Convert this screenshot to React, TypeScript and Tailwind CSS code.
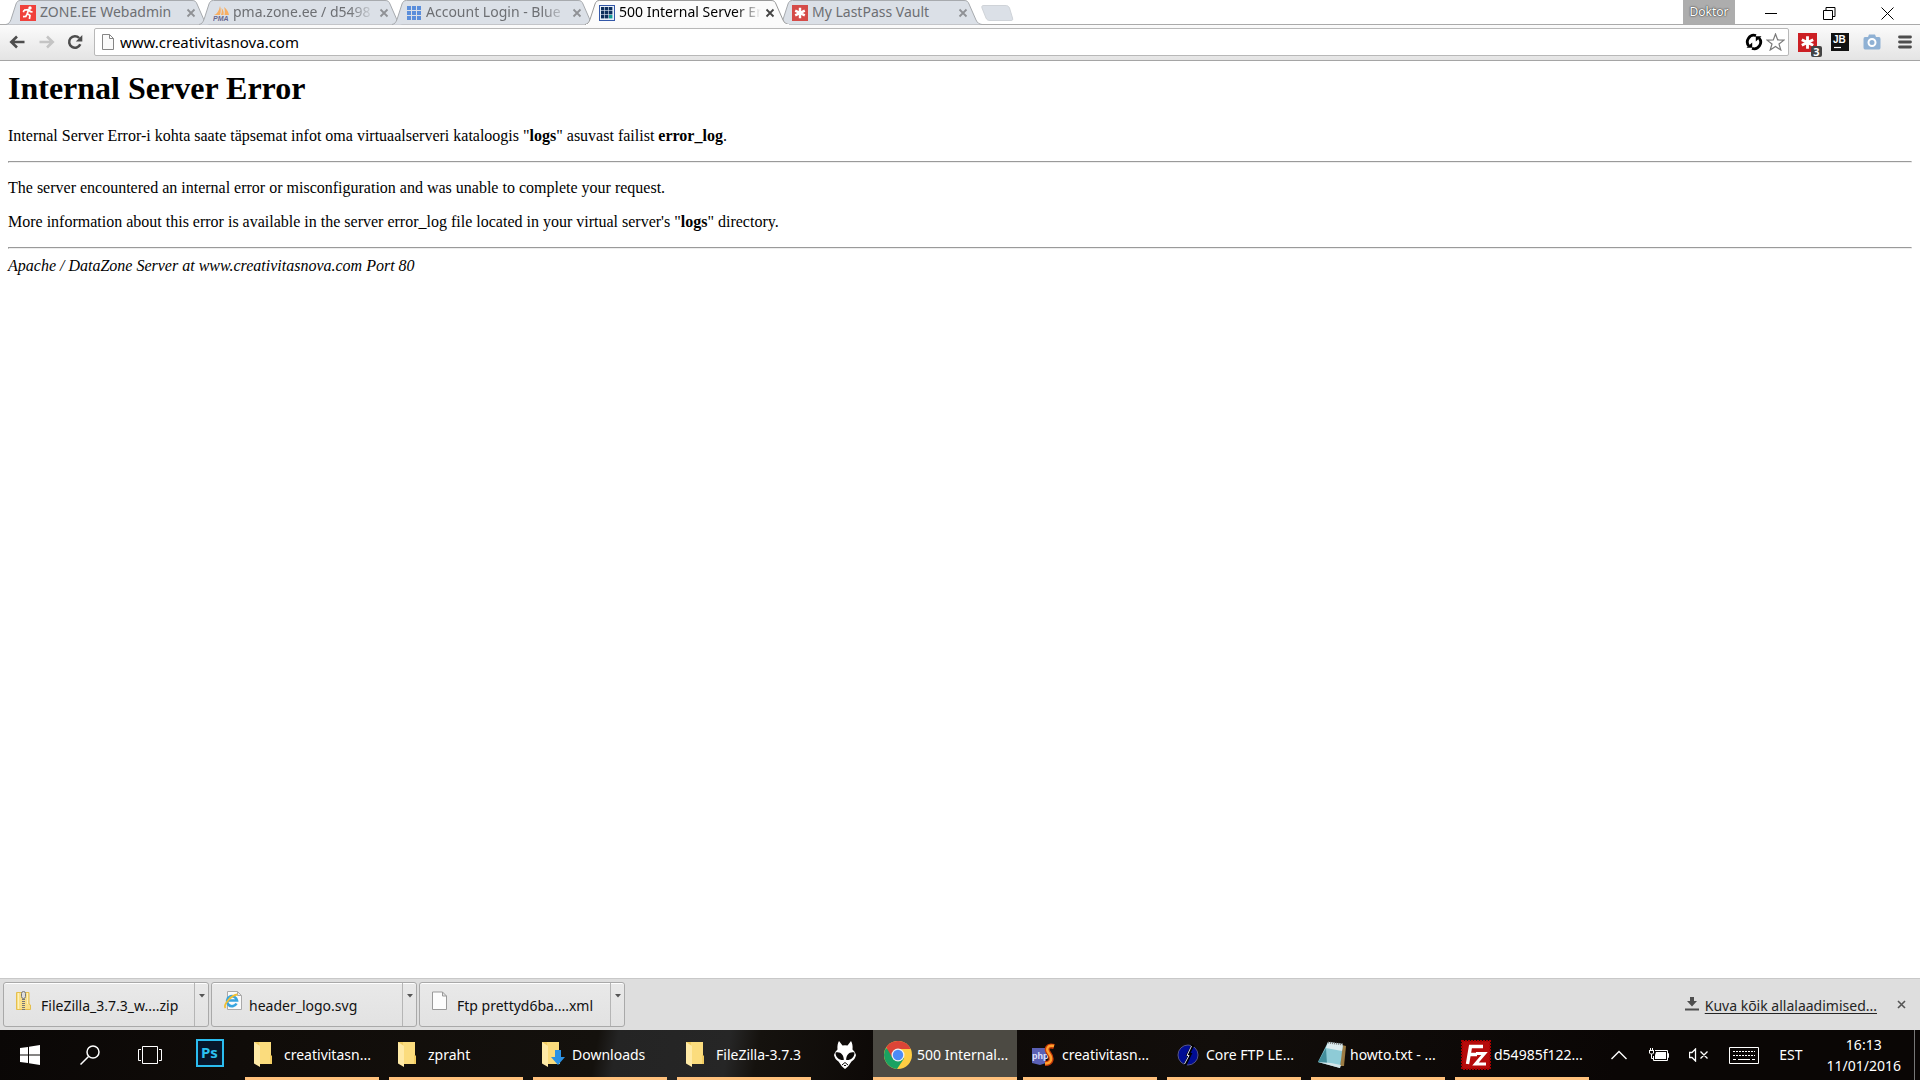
import type { ReactNode } from "react";
import clsx from "clsx";

/* ---------- Favicons ---------- */

function ZoneIcon() {
  return (
    <svg width="16" height="16" viewBox="0 0 16 16">
      <rect width="16" height="16" fill="#f0413c" />
      <circle cx="10" cy="3" r="1.7" fill="#fff" />
      <path d="M4 5.2 8.6 4.6 10.4 6.6 12.6 7M8.6 5 7.2 8.6 10 10.4 9.4 14M7.2 8.8 5.8 11.4 3 11.6M4 5.2 3.4 7.2" fill="none" stroke="#fff" strokeWidth="1.7" />
    </svg>
  );
}

function PmaIcon() {
  return (
    <svg width="17" height="16" viewBox="0 0 17 16">
      <path d="M1 10C4 9 6 6 7 1c1 3 1 6 0 9zM8 10c1-3 1-5 .500-7 2 2 2.500 4 2 7zM11.500 10c.500-3 .500-5-.500-8 3 2 4.500 5 5 8z" fill="#f7ae62" />
      <text x="0" y="15.500" fontSize="7" fontWeight="700" fontStyle="italic" fill="#67678f" fontFamily="Liberation Sans, sans-serif">PMA</text>
    </svg>
  );
}

function GridIcon({ dark }: { dark?: boolean }) {
  const cells = [0, 1, 2, 3, 4, 5, 6, 7, 8];
  return (
    <svg width="16" height="16" viewBox="0 0 16 16">
      {dark && <rect x="0.500" y="0.500" width="15" height="15" fill="#e8f1fa" stroke="#3357a8" />}
      {cells.map((i) =>
        dark ? (
          <rect key={i} x={2 + (i % 3) * 4} y={2 + Math.floor(i / 3) * 4} width="3.400" height="3.400" fill={i === 8 ? "#119c94" : "#0d2f5d"} />
        ) : (
          <rect key={i} x={1 + (i % 3) * 5} y={1 + Math.floor(i / 3) * 5} width="4" height="4" fill="#5b8edb" />
        )
      )}
    </svg>
  );
}

function LastPassIcon({ size = 16, color = "#d54b48" }: { size?: number; color?: string }) {
  return (
    <svg width={size} height={size} viewBox="0 0 16 16">
      <rect width="16" height="16" fill={color} />
      <path d="M8 2.800v10.400M3.200 5.600l9.600 4.800M12.800 5.600l-9.600 4.800" stroke="#fff" strokeWidth="2.400" />
    </svg>
  );
}

/* ---------- Tab strip ---------- */

const tabs = [
  { title: "ZONE.EE Webadmin", icon: <ZoneIcon /> },
  { title: "pma.zone.ee / d5498", icon: <PmaIcon />, faded: true },
  { title: "Account Login - Blue", icon: <GridIcon />, faded: true },
  { title: "500 Internal Server Er", icon: <GridIcon dark />, active: true, faded: true },
  { title: "My LastPass Vault", icon: <LastPassIcon /> },
];

interface TabProps {
  title: string;
  icon: ReactNode;
  active?: boolean;
  faded?: boolean;
}

function Tab({ title, icon, active, faded }: TabProps) {
  return (
    <div className={clsx("relative -mr-4 h-[25px] w-[209px] shrink-0", active && "z-10")}>
      <svg className="absolute inset-0" width="209" height="25" viewBox="0 0 209 25">
        <path
          d="M0 24.500C3 24 4 22 5 19.500L10 4C11 1.500 12 .500 14.500 .500H186C189 .500 190 1.500 191 4L198 20C199.500 23 201 24 204 24.500"
          fill={active ? "#fbfbfb" : "#dbe0e7"}
          stroke={active ? "#999" : "#a7aaae"}
        />
        {active && <path d="M1 24.500H204" stroke="#fbfbfb" />}
      </svg>
      <div className="relative flex h-6 items-center pl-[14px]">
        <span className="w-5 shrink-0 pt-px">{icon}</span>
        <button
          className={clsx(
            "w-[142px] shrink-0 text-left text-[14px] leading-6 whitespace-nowrap",
            active ? "text-black" : "text-[#6d6f73]",
            faded && "[mask-image:linear-gradient(to_right,#000_116px,transparent)]"
          )}
        >
          {title}
        </button>
        <button aria-label={`Close ${title}`} className={clsx("ml-1 pt-0.5", active ? "text-[#444]" : "text-[#8f9195]")}>
          <svg width="10" height="10" viewBox="0 0 10 10">
            <path d="M1.500 1.500l7 7M8.500 1.500l-7 7" stroke="currentColor" strokeWidth="1.800" />
          </svg>
        </button>
      </div>
    </div>
  );
}

function TabStrip() {
  return (
    <header className="relative flex h-[25px] items-start border-b border-[#aaa] bg-white pl-[6px]">
      {tabs.map((tab) => (
        <Tab key={tab.title} {...tab} />
      ))}
      <button aria-label="New tab" className="mt-[5px] ml-[22px]">
        <svg width="34" height="16" viewBox="0 0 34 16" className="-ml-3">
          <path d="M3 .500H24C26.500 .500 27.500 1 28.500 3L31.500 13C32 15 31.500 15.500 30 15.500H9C7 15.500 6 15 5 13L1 3C.500 1 1 .500 3 .500z" fill="#dbe0e7" stroke="#cfd3d8" />
        </svg>
      </button>
      <div className="ml-auto flex items-start pr-1">
        <button className="mr-[7px] h-6 w-[52px] bg-[#adadad] text-[12px] leading-6 text-white [text-shadow:0_0_2px_#333,0_0_1px_#333]">Doktor</button>
        <button aria-label="Minimize" className="flex h-6 w-[58px] items-center justify-center pt-[3px]">
          <svg width="13" height="13" viewBox="0 0 13 13" stroke="#000" fill="none"><path d="M0 6.500h12" /></svg>
        </button>
        <button aria-label="Restore" className="flex h-6 w-[58px] items-center justify-center pt-[3px]">
          <svg width="13" height="13" viewBox="0 0 13 13" stroke="#000" fill="none">
            <path d="M.500 3.500h9v9h-9zM3 3.500V.500h9v9H9.500" />
          </svg>
        </button>
        <button aria-label="Close" className="flex h-6 w-[58px] items-center justify-center pt-[3px]">
          <svg width="13" height="13" viewBox="0 0 13 13" stroke="#000" fill="none"><path d="M.500 .500l12 12M12.500 .500l-12 12" /></svg>
        </button>
      </div>
    </header>
  );
}

/* ---------- Toolbar ---------- */

function Toolbar() {
  return (
    <nav className="flex h-9 items-center border-b border-[#a5a5a5] bg-linear-to-b from-[#fbfbfb] to-[#e4e4e4] pr-2 pb-px pl-[9px]">
      <button aria-label="Back">
        <svg width="16" height="14" viewBox="0 0 16 14"><path d="M15.500 7H3M8 1.500 2.300 7 8 12.500" fill="none" stroke="#4d4d4d" strokeWidth="2.600" /></svg>
      </button>
      <button aria-label="Forward" className="ml-[14px]">
        <svg width="16" height="14" viewBox="0 0 16 14"><path d="M.500 7H13M8 1.500 13.700 7 8 12.500" fill="none" stroke="#c4c4c4" strokeWidth="2.600" /></svg>
      </button>
      <button aria-label="Reload" className="ml-3">
        <svg width="16" height="16" viewBox="0 0 16 16">
          <path d="M13.300 10.300A5.800 5.800 0 1 1 12.200 4" fill="none" stroke="#4d4d4d" strokeWidth="2.500" />
          <path d="M15.300 1v6.500H8.800z" fill="#4d4d4d" />
        </svg>
      </button>
      <div className="ml-[11px] flex h-7 flex-1 items-center rounded-[2px] border border-[#b8b8b8] bg-white pr-[3px] pl-[7px]">
        <svg width="12" height="16" viewBox="0 0 12 16">
          <path d="M.500 .500H7.500L11.500 4.500V15.500H.500zM7.500 .500V4.500H11.500" fill="#fafafa" stroke="#858585" />
        </svg>
        <input
          aria-label="Address"
          defaultValue="www.creativitasnova.com"
          className="ml-[6px] min-w-0 flex-1 bg-transparent text-[15px] leading-6 text-black outline-none"
        />
        {/* Page action: two chasing arrows */}
        <svg width="18" height="18" viewBox="0 0 18 18" fill="none" stroke="#000" strokeWidth="2.800">
          <path d="M11 2.600A6.600 6.600 0 0 0 4 13.200M7 15.400A6.600 6.600 0 0 0 14 4.800" />
          <path d="M1.500 14.800H7.200V9.500zM16.500 3.200H10.800V8.500z" fill="#000" stroke="none" />
        </svg>
        <button aria-label="Bookmark" className="ml-[3px]">
          <svg width="19" height="18" viewBox="0 0 19 18">
            <path d="M9.500 1l2.200 5.900 6.300.200-5 3.900 1.800 6-5.300-3.500L4.200 17 6 11 1 7.100l6.300-.200z" fill="#fff" stroke="#7a7a7a" strokeWidth="1.200" />
          </svg>
        </button>
      </div>
      <button aria-label="LastPass" className="relative ml-[9px]">
        <LastPassIcon size={19} color="#cc1f24" />
        <span className="absolute -right-[5px] -bottom-[5px] h-[11px] w-[11px] rounded-[2px] bg-[#444] text-center text-[11px] leading-[11px] font-bold text-white">3</span>
      </button>
      <button aria-label="JetBrains" className="ml-[14px]">
        <svg width="18" height="18" viewBox="0 0 18 18">
          <rect width="18" height="18" fill="#111" />
          <text x="2" y="10" fontSize="10" fontWeight="700" fill="#fff" fontFamily="Liberation Sans, sans-serif">JB</text>
          <path d="M3 14.500h7" stroke="#fff" strokeWidth="1.200" />
        </svg>
      </button>
      <button aria-label="Screenshot" className="ml-[14px]">
        <svg width="18" height="16" viewBox="0 0 18 16">
          <path d="M2 3H5L6 .500H12L13 3H16Q17.500 3 17.500 5V13.500Q17.500 15.500 16 15.500H2Q.500 15.500 .500 13.500V5Q.500 3 2 3z" fill="#8fb1d4" />
          <circle cx="9" cy="8.500" r="3.500" fill="#8fb1d4" stroke="#fff" strokeWidth="2" />
        </svg>
      </button>
      <button aria-label="Menu" className="ml-[17px]">
        <svg width="14" height="14" viewBox="0 0 14 14"><path d="M1.500 2h11M1.500 7h11M1.500 12h11" stroke="#4d4d4d" strokeWidth="2.800" strokeLinecap="round" /></svg>
      </button>
    </nav>
  );
}

/* ---------- Page ---------- */

function ErrorPage() {
  const rule = "h-[2px] border border-[#9a9a9a] border-r-[#eee] border-b-[#eee]";
  return (
    <main className="flex-1 bg-white p-2 font-['Liberation_Serif',serif] text-[16px] leading-[18px] text-black">
      <h1 className="text-[32px] leading-[38px] font-bold">Internal Server Error</h1>
      <p className="mt-5">
        Internal Server Error-i kohta saate täpsemat infot oma virtuaalserveri kataloogis "<b>logs</b>" asuvast failist <b>error_log</b>.
      </p>
      <hr className={clsx(rule, "my-4")} />
      <p>The server encountered an internal error or misconfiguration and was unable to complete your request.</p>
      <p className="mt-4">
        More information about this error is available in the server error_log file located in your virtual server's "<b>logs</b>" directory.
      </p>
      <hr className={clsx(rule, "mt-4 mb-2")} />
      <address className="italic">Apache / DataZone Server at www.creativitasnova.com Port 80</address>
    </main>
  );
}

/* ---------- Download shelf ---------- */

function ZipIcon() {
  return (
    <svg width="16" height="20" viewBox="0 0 16 20">
      <path d="M.500 1.500H13V13L14.500 14V18.500H.500z" fill="#f9e08a" stroke="#e5bf4e" />
      <path d="M2.500 2v16M11.500 2v11" stroke="#fdf1bd" />
      <rect x="5.500" y=".500" width="4" height="7" rx="2" fill="#ddd" stroke="#777" />
      <path d="M7.500 8v11" stroke="#777" strokeWidth="3" strokeDasharray="1 1" />
    </svg>
  );
}

function SvgFileIcon() {
  return (
    <svg width="18" height="20" viewBox="0 0 18 20">
      <path d="M3.500 .500H13.500L17.500 4.500V18.500H3.500zM13.500 .500V4.500H17.500" fill="#fafafa" stroke="#aaa" />
      <path d="M12.500 12.500A5 5 0 1 1 13 9.500H4" fill="none" stroke="#38a5df" strokeWidth="2.600" />
      <path d="M1.500 17C-1 14 7 4 13.500 3.500" fill="none" stroke="#f1bf33" strokeWidth="1.800" />
    </svg>
  );
}

function BlankFileIcon() {
  return (
    <svg width="15" height="20" viewBox="0 0 15 20">
      <path d="M.500 1H10.500L14.500 5V18.500H.500zM10.500 1V5H14.500" fill="#fcfcfc" stroke="#999" />
    </svg>
  );
}

const downloads = [
  { name: "FileZilla_3.7.3_w....zip", icon: <ZipIcon /> },
  { name: "header_logo.svg", icon: <SvgFileIcon /> },
  { name: "Ftp prettyd6ba....xml", icon: <BlankFileIcon /> },
];

function DownloadShelf() {
  return (
    <section className="flex h-[52px] items-start gap-[2px] border-t border-[#c8c8c8] bg-[#dedede] pt-[3px] pl-[3px]">
      {downloads.map((file) => (
        <div key={file.name} className="flex h-[45px] w-[206px] rounded-[3px] border border-[#a9a9a9] bg-linear-to-b from-[#e9e9e9] to-[#e2e2e2] shadow-[inset_0_1px_0_#fff]">
          <button className="flex flex-1 pt-2 pl-3 text-left text-[14px] leading-6 whitespace-nowrap text-[#111]">
            <span className="w-[25px] shrink-0">{file.icon}</span>
            <span className="pt-[3px]">{file.name}</span>
          </button>
          <button aria-label={`Options for ${file.name}`} className="flex w-[14px] items-start justify-center border-l border-[#b5b5b5] pt-[11px]">
            <svg width="6" height="4" viewBox="0 0 6 4"><path d="M0 0h6L3 3.500z" fill="#555" /></svg>
          </button>
        </div>
      ))}
      <div className="ml-auto flex items-center pt-3 pr-[14px]">
        <svg className="mb-1" width="14" height="14" viewBox="0 0 14 14"><path d="M5 0h4v4h3L7 9.500 2 4h3zM0 11.500h14v2H0z" fill="#4f4f4f" /></svg>
        <a href="#downloads" className="ml-[6px] text-[14px] leading-6 text-[#252525] underline underline-offset-2">Kuva kõik allalaadimised...</a>
        <button aria-label="Close downloads" className="mb-1 ml-5">
          <svg width="9" height="9" viewBox="0 0 9 9"><path d="M1 1l7 7M8 1l-7 7" stroke="#555" strokeWidth="1.600" /></svg>
        </button>
      </div>
    </section>
  );
}

/* ---------- Taskbar ---------- */

function FolderIcon({ download }: { download?: boolean }) {
  return (
    <svg width="24" height="26" viewBox="0 0 24 26">
      <path d="M0 0H17V13L18 14V22H2z" fill="#f2cd62" />
      <path d="M5 0H17V13H16V22H5z" fill="#fbdc7d" />
      <path d="M0 0 6 4V25L0 21.500z" fill="#ffeaa6" />
      {download && <path d="M13 8h6v7h4l-7 8-7-8h4z" fill="#2c92e4" />}
    </svg>
  );
}

function ChromeIcon() {
  return (
    <svg width="28" height="28" viewBox="0 0 28 28">
      <circle cx="14" cy="14" r="14" fill="#ffcd43" />
      <path d="M14 14 1.900 7A14 14 0 0 0 13 28L20 17.500z" fill="#1ba261" />
      <path d="M14 8H26.600A14 14 0 0 0 2.300 6.300L8.500 17z" fill="#dc4437" />
      <circle cx="14" cy="14" r="6.500" fill="#f1f1f1" />
      <circle cx="14" cy="14" r="5.200" fill="#4c8bf5" />
    </svg>
  );
}

function PhpStormIcon() {
  return (
    <svg width="24" height="24" viewBox="0 0 24 24">
      <path d="M0 5h14v15l-6 2-8-2z" fill="#5a60b4" />
      <text x="0" y="16" fontSize="9" fontWeight="700" fill="#dfe0fb" fontFamily="Liberation Sans, sans-serif">php</text>
      <path d="M22 3.500C15.500 1.500 13.500 6 17 10.500S20 20.500 13 20.500" fill="none" stroke="#c83a08" strokeWidth="5" />
      <path d="M22 3C15.500 1.500 13.500 6 17 10.500S20 20.500 13 20.500" fill="none" stroke="#ffa02e" strokeWidth="2.400" />
    </svg>
  );
}

function CoreFtpIcon() {
  return (
    <svg width="22" height="22" viewBox="0 0 22 22">
      <circle cx="11" cy="11" r="10" fill="#000c94" stroke="#55558a" />
      <path d="M16 1 11 10.500h2L8 21" fill="none" stroke="#000" strokeWidth="3" />
      <path d="M14.500 2 10 11.500h2L7.500 20" fill="none" stroke="#d8d8ef" />
    </svg>
  );
}

function NotepadIcon() {
  return (
    <svg width="28" height="28" viewBox="0 0 28 28">
      <path d="M24 4 28 5 26 25H22z" fill="#9d7c44" />
      <path d="M10 1 25 3 22 27 0 21z" fill="#8ecbd6" />
      <path d="M10 1 25 3 24 10 8 7z" fill="#dcecef" />
      <path d="M8 7 0 21 9 23z" fill="#438e9c" />
      <path d="M0 21 22 27 23 24 13 22z" fill="#d5e5e8" />
      <path d="M10 1.500 25 3.500" stroke="#777" strokeWidth="2" strokeDasharray="1 1" />
    </svg>
  );
}

function FileZillaIcon() {
  return (
    <svg width="30" height="30" viewBox="0 0 30 30">
      <rect x="1" y="1" width="28" height="28" fill="#b60b0b" stroke="#a00" strokeWidth="2" strokeDasharray="2 1" />
      <path d="M6.500 24 9.500 6.500H22M8 14.500H16" fill="none" stroke="#fff" strokeWidth="3.400" />
      <path d="M15 13.500H23.500L14.500 24H25" fill="none" stroke="#fff" strokeWidth="3" />
    </svg>
  );
}

function FoobarIcon() {
  return (
    <svg width="22" height="28" viewBox="0 0 22 28">
      <path d="M5 0 8.500 4.500Q11 3.800 13.500 4.500L17 0Q19 3 18.500 8.500Q21.500 11 22 14Q21 18.500 17.500 20.500L14 25.500 11 28 8 25.500 4.500 20.500Q1 18.500 0 14Q.500 11 3.500 8.500Q3 3 5 0z" fill="#fff" />
      <path d="M1.500 11.500C6 10 10 13.500 9.800 19C5.500 19.500 1.500 16.500 1.500 11.500zM20.500 11.500C16 10 12 13.500 12.200 19C16.500 19.500 20.500 16.500 20.500 11.500z" fill="#0b0908" />
      <path d="M8 24 11 21.500 14 24M10 24.500h2" fill="none" stroke="#0b0908" />
    </svg>
  );
}

interface TaskItem {
  label: string;
  icon: ReactNode;
  active?: boolean;
}

const folders: TaskItem[] = [
  { label: "creativitasn...", icon: <FolderIcon /> },
  { label: "zpraht", icon: <FolderIcon /> },
  { label: "Downloads", icon: <FolderIcon download /> },
  { label: "FileZilla-3.7.3", icon: <FolderIcon /> },
];

const programs: TaskItem[] = [
  { label: "500 Internal...", icon: <ChromeIcon />, active: true },
  { label: "creativitasn...", icon: <PhpStormIcon /> },
  { label: "Core FTP LE...", icon: <CoreFtpIcon /> },
  { label: "howto.txt - ...", icon: <NotepadIcon /> },
  { label: "d54985f122...", icon: <FileZillaIcon /> },
];

function TaskButton({ label, icon, active }: TaskItem) {
  return (
    <button className={clsx("flex w-36 shrink-0 flex-col text-white", active ? "mr-px bg-[#4c4a43]" : "px-[5px]")}>
      <span className={clsx("flex h-[47px] w-full items-center pt-[3px]", active ? "pl-[11px]" : "pl-[6px]")}>
        <span className={clsx("flex shrink-0 justify-center", active ? "w-7" : "w-[30px]")}>{icon}</span>
        <span className={clsx("text-[14px] leading-5 whitespace-nowrap", active ? "ml-[5px]" : "ml-[3px]")}>{label}</span>
      </span>
      <span className="h-[3px] w-full bg-[#ffc17c]" />
    </button>
  );
}

function IconButton({ label, children }: { label: string; children: ReactNode }) {
  return (
    <button aria-label={label} className="flex w-[60px] shrink-0 items-center justify-center">
      {children}
    </button>
  );
}

function Taskbar() {
  return (
    <footer className="flex h-[50px] bg-[linear-gradient(100deg,#0a0706_0,#100c09_240px,#14110d_590px,#242424_610px,#262626_720px,#15120e_750px,#0d0907_870px,#120e0b_1200px,#0a0605_1600px)] text-white">
      <IconButton label="Start">
        <svg width="20" height="20" viewBox="0 0 20 20"><path d="M0 3 8 2V9.500H0zM9 1.800 20 0V9.500H9zM0 10.500H8V18L0 17zM9 10.500H20V20L9 18.200z" fill="#fff" /></svg>
      </IconButton>
      <IconButton label="Search">
        <svg width="20" height="20" viewBox="0 0 20 20" fill="none" stroke="#fff" strokeWidth="1.500"><circle cx="13" cy="7" r="6" /><path d="M8.500 11.500 .500 19.500" /></svg>
      </IconButton>
      <IconButton label="Task view">
        <svg width="24" height="18" viewBox="0 0 24 18" fill="none" stroke="#fff"><path d="M4.500 .500h15v17h-15zM3 3.500H.500v11H3M21 3.500h2.500v11H21" /></svg>
      </IconButton>
      <IconButton label="Photoshop">
        <svg className="mb-1" width="28" height="28" viewBox="0 0 28 28">
          <rect x="1" y="1" width="26" height="26" fill="#07162b" stroke="#2bbdf0" strokeWidth="2" />
          <text x="5" y="19" fontSize="15" fontWeight="700" fill="#2cc0f2" fontFamily="Noto Sans, sans-serif">Ps</text>
        </svg>
      </IconButton>
      {folders.map((item) => (
        <TaskButton key={item.label} {...item} />
      ))}
      <button aria-label="foobar2000" className="flex w-[57px] shrink-0 items-center justify-center">
        <FoobarIcon />
      </button>
      {programs.map((item) => (
        <TaskButton key={item.label} {...item} />
      ))}
      <div className="ml-auto flex items-center">
        <button aria-label="Show hidden icons">
          <svg width="16" height="10" viewBox="0 0 16 10"><path d="M.500 9 8 1.500 15.500 9" fill="none" stroke="#fff" strokeWidth="1.400" /></svg>
        </button>
        <svg className="ml-[22px]" width="20" height="14" viewBox="0 0 20 14">
          <path d="M6 2.500H18.500V12.500H4.500V8M18.500 5.500h1v4h-1" fill="none" stroke="#fff" />
          <path d="M7 4h10v7H6V7z" fill="#fff" />
          <path d="M1.500 0v2M3.500 0v2M0 2.500h5M.500 3v2l1 1h2l1-1V3M2.500 6v4.500h2" fill="none" stroke="#fff" />
        </svg>
        <svg className="ml-5" width="19" height="14" viewBox="0 0 19 14" fill="none" stroke="#fff" strokeWidth="1.300">
          <path d="M.500 4.500H3L6.500 1V13L3 9.500H.500zM11.500 3.500l7 7M18.500 3.500l-7 7" />
        </svg>
        <svg className="ml-[21px]" width="30" height="17" viewBox="0 0 30 17" fill="none" stroke="#fff">
          <path d="M.500 .500h29v16H.500z" />
          <path d="M4 4.500h22M4 8.500h22" strokeDasharray="2 1" />
          <path d="M4 12.500h3M9 12.500h12M23 12.500h3" />
        </svg>
        <button className="ml-[20px] text-[14px] leading-5">EST</button>
        <button className="ml-6 flex flex-col items-center pb-px text-[14px] leading-[21px]">
          <span>16:13</span>
          <span>11/01/2016</span>
        </button>
        <span className="ml-[13px] h-[50px] w-[6px] border-l border-[#777]" />
      </div>
    </footer>
  );
}

export default function App() {
  return (
    <div className="flex min-h-screen flex-col overflow-hidden bg-white font-['Noto_Sans',sans-serif]">
      <TabStrip />
      <Toolbar />
      <ErrorPage />
      <DownloadShelf />
      <Taskbar />
    </div>
  );
}
